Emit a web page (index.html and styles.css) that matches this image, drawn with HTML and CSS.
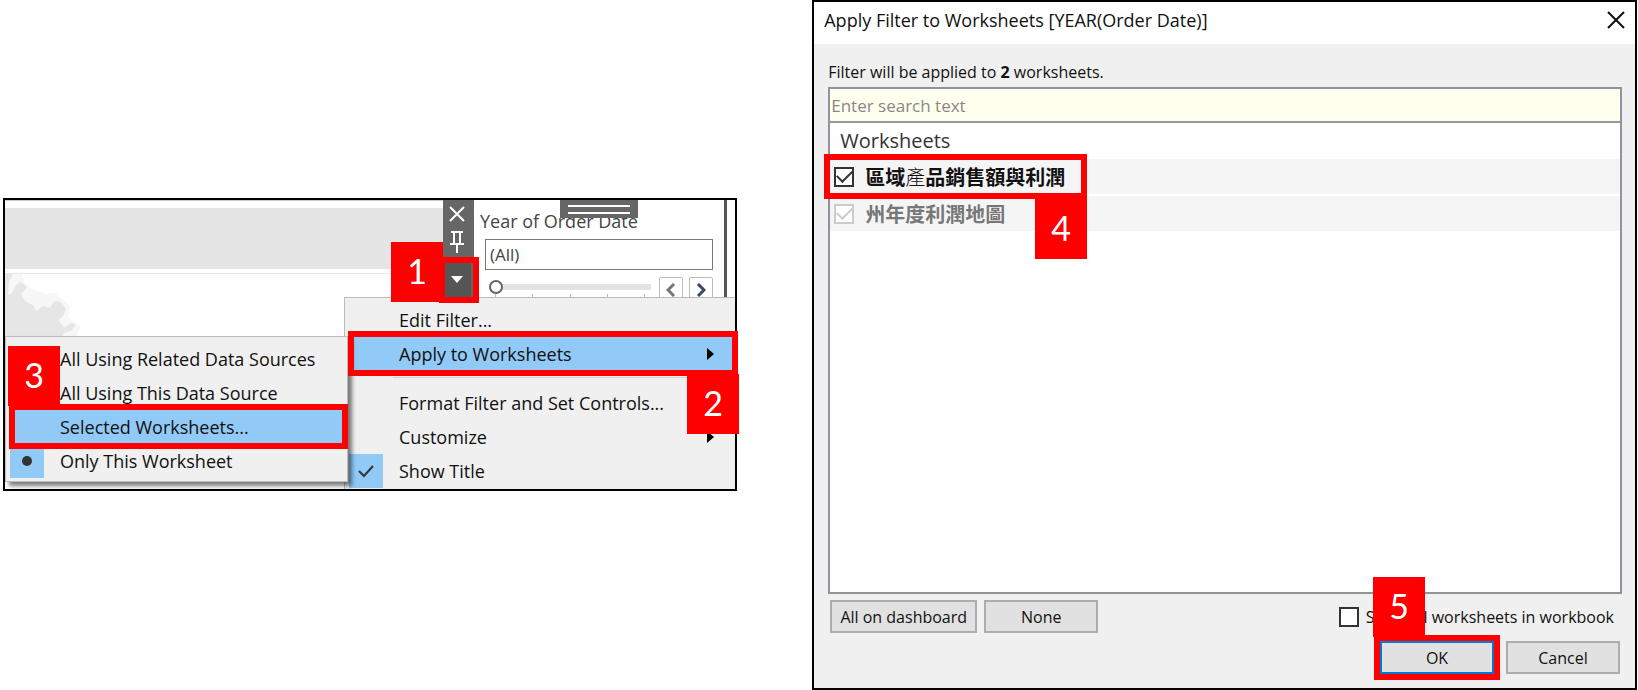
FILE: index.html
```html
<!DOCTYPE html>
<html lang="zh-Hant">
<head>
<meta charset="utf-8">
<title>Apply Filter to Worksheets</title>
<link rel="stylesheet" href="styles.css">
</head>
<body>
<main class="guide">
  <section class="dashboard" aria-label="Dashboard filter menu">
    <div class="sheet">
      <div class="sheet-band"></div>
      <svg class="map" width="82" height="64" viewBox="0 0 82 64" aria-hidden="true">
        <path fill="#f7f7f7" d="M0 0H16L20 10L27 15L42 20L50 19L60 28L65 33L63 43L70 49L76 52L70 64H0Z"/>
        <path fill="#e6e6e6" d="M0 0H8L4 7L3 21L7 19L11 11L16 8L22 13L16 20L20 27L29 32L31 37L38 32L45 34L49 27L56 28L61 35L58 42L53 46L59 54L66 49L71 51L66 57L59 59L57 64H0Z"/>
      </svg>
    </div>
    <div class="card-tools">
      <button class="tool" aria-label="Remove"><svg width="18" height="18" viewBox="0 0 18 18"><path d="M2 2L16 16M16 2L2 16" stroke="#fff" stroke-width="2" fill="none"/></svg></button>
      <button class="tool" aria-label="Pin"><svg width="14" height="22" viewBox="0 0 14 22"><path d="M1 1H13M4 1V12M10 1V12M0 13H14M7 13V22" stroke="#fff" stroke-width="2" fill="none"/></svg></button>
      <button class="tool tool-menu" aria-label="More options"><svg width="12" height="7" viewBox="0 0 12 7"><path d="M0 0H12L6 7Z" fill="#fff"/></svg></button>
      <span class="ring ring-tool"></span>
      <span class="badge badge-1">1</span>
    </div>
    <div class="filter-card">
      <label class="card-title" for="year">Year of Order Date</label>
      <span class="handle"></span>
      <input class="year" id="year" type="text" value="(All)">
      <div class="slider-row">
        <div class="slider">
          <input class="range" type="range" min="0" max="4" value="0" aria-label="Year">
          <div class="ticks"><i></i><i></i><i></i><i></i><i></i></div>
        </div>
        <button class="step" aria-label="Previous"><svg width="10" height="14" viewBox="0 0 10 14"><path d="M8 1L2 7L8 13" stroke="#777" stroke-width="3" fill="none"/></svg></button>
        <button class="step" aria-label="Next"><svg width="10" height="14" viewBox="0 0 10 14"><path d="M2 1L8 7L2 13" stroke="#3c4a60" stroke-width="3" fill="none"/></svg></button>
      </div>
    </div>
    <div class="menu main-menu" role="menu">
      <button class="item" role="menuitem">Edit Filter...</button>
      <div class="callout">
        <button class="item active" role="menuitem">Apply to Worksheets<svg class="arrow" width="8" height="12" viewBox="0 0 8 12"><path d="M0 0L7 6L0 12Z"/></svg></button>
        <span class="ring ring-apply"></span>
        <span class="badge badge-2">2</span>
      </div>
      <div class="divider"></div>
      <button class="item" role="menuitem">Format Filter and Set Controls...</button>
      <button class="item" role="menuitem">Customize<svg class="arrow" width="8" height="12" viewBox="0 0 8 12"><path d="M0 0L7 6L0 12Z"/></svg></button>
      <button class="item" role="menuitemcheckbox" aria-checked="true"><span class="mark"><svg width="18" height="14" viewBox="0 0 18 14"><path d="M2 7L7 12L16 2" stroke="#333" stroke-width="2" fill="none"/></svg></span>Show Title</button>
    </div>
    <div class="menu sub-menu" role="menu">
      <button class="item" role="menuitem">All Using Related Data Sources</button>
      <button class="item" role="menuitem">All Using This Data Source</button>
      <div class="callout">
        <button class="item active" role="menuitem">Selected Worksheets...</button>
        <span class="ring ring-selected"></span>
        <span class="badge badge-3">3</span>
      </div>
      <button class="item" role="menuitemradio" aria-checked="true"><span class="mark"><svg width="10" height="10" viewBox="0 0 10 10"><circle cx="5" cy="5" r="5" fill="#333"/></svg></span>Only This Worksheet</button>
    </div>
  </section>

  <section class="dialog" role="dialog" aria-labelledby="dialog-title">
    <header class="title-bar">
      <h1 class="dialog-title" id="dialog-title">Apply Filter to Worksheets [YEAR(Order Date)]</h1>
      <button class="close" aria-label="Close"><svg width="18" height="18" viewBox="0 0 18 18"><path d="M1 1L17 17M17 1L1 17" stroke="#111" stroke-width="2" fill="none"/></svg></button>
    </header>
    <div class="dialog-body">
      <p class="summary">Filter will be applied to <b>2</b> worksheets.</p>
      <div class="picker">
        <input class="search" type="text" placeholder="Enter search text" aria-label="Search worksheets">
        <h2 class="list-title">Worksheets</h2>
        <div class="row callout">
          <label class="choice"><input class="box" type="checkbox" checked><span class="name">區域<span class="thin">產</span>品銷售額與利潤</span></label>
          <span class="ring ring-row"></span>
          <span class="badge badge-4">4</span>
        </div>
        <div class="row">
          <label class="choice"><input class="box" type="checkbox" checked disabled><span class="name muted">州年度利潤地圖</span></label>
        </div>
      </div>
      <div class="options">
        <button class="btn btn-wide">All on dashboard</button>
        <button class="btn">None</button>
        <label class="show-all"><input class="box" type="checkbox"><span>Show all worksheets in workbook</span></label>
      </div>
      <div class="actions">
        <div class="callout">
          <button class="btn btn-default">OK</button>
          <span class="ring ring-ok"></span>
          <span class="badge badge-5">5</span>
        </div>
        <button class="btn">Cancel</button>
      </div>
    </div>
  </section>
</main>
</body>
</html>
```

FILE: styles.css
```css
* { box-sizing: border-box; }

body {
  margin: 0;
  background: #fff;
  color: #111;
  font: 18px/24px "Open Sans", "Noto Sans", "Noto Sans CJK TC", sans-serif;
}

button, input { font: inherit; color: inherit; }
button { border: 0; padding: 0; background: none; }
svg { display: block; }

.guide {
  display: flex;
  align-items: center;
  gap: 75px;
  min-height: 100vh;
  padding: 0 1px 0 3px;
}

/* Numbered step markers */
.callout { position: relative; }

.ring {
  position: absolute;
  border: 6px solid #f00;
  z-index: 2;
  pointer-events: none;
}

.badge {
  position: absolute;
  z-index: 3;
  width: 52px;
  height: 60px;
  background: #f00;
  color: #fff;
  font: 34px/58px Lato, sans-serif;
  text-align: center;
}

.ring-tool { inset: 57px -5px -6px -4px; }
.badge-1 { left: -52px; top: 42px; }
.ring-apply { inset: -6px -3px -5px -1px; }
.badge-2 { right: -4px; top: 37px; }
.ring-selected { inset: -6px -1px -5px -1px; }
.badge-3 { left: -2px; top: -64px; }
.ring-row { left: -6px; top: -5px; width: 263px; height: 45px; }
.badge-4 { left: 205px; top: 40px; }
.ring-ok { inset: -6px; }
.badge-5 { left: -7px; top: -64px; }

/* Dashboard with open menus */
.dashboard {
  flex: 734 1 0;
  display: grid;
  grid-template-columns: 339px 99px 31px 1fr;
  grid-template-rows: 97px auto;
  margin-bottom: 2px;
  border: 2px solid #000;
}

.sheet {
  grid-area: 1 / 1 / 3 / 3;
  padding-top: 7px;
  border-top: 1px solid #ccc;
}

.sheet-band {
  height: 66px;
  border-bottom: 1px solid #e8e8e8;
  background: linear-gradient(#e5e5e5 61px, #fff 61px);
}

.card-tools {
  grid-area: 1 / 3;
  position: relative;
  display: flex;
  flex-direction: column;
  padding-right: 3px;
  background: #666;
}

.tool { display: grid; place-items: center; height: 28px; }
.tool-menu { height: 34px; margin-top: 7px; background: #555; }

.filter-card {
  grid-area: 1 / 4;
  position: relative;
  display: flex;
  flex-direction: column;
  height: 97px;
  margin-right: 8px;
  padding: 9px 11px 0;
  border-right: 3px solid #555;
  overflow: hidden;
}

.card-title { margin: 0 -5px 6px; color: #444; }

.handle {
  position: absolute;
  left: 86px;
  top: 0;
  width: 78px;
  height: 18px;
  background: linear-gradient(#fff, #fff) 50% 5px / 62px 2px no-repeat,
    linear-gradient(#fff, #fff) 50% 12px / 62px 2px no-repeat, #666;
}

.year {
  flex: none;
  width: 100%;
  height: 31px;
  padding: 0 4px;
  border: 1px solid #777;
  background: #fff;
  color: #444;
  font-size: 17px;
}

.slider-row { display: flex; gap: 6px; margin-top: 7px; }
.slider { flex: 1; padding: 3px 2px 0 4px; }

.range {
  appearance: none;
  display: block;
  width: 100%;
  height: 14px;
  margin: 0;
  background: linear-gradient(#e3e3e3, #e3e3e3) 0 4px / 100% 6px no-repeat;
}

.range::-webkit-slider-thumb {
  appearance: none;
  width: 14px;
  height: 14px;
  border: 2px solid #666;
  border-radius: 50%;
  background: #fff;
}

.ticks { display: flex; justify-content: space-between; padding: 0 6px; }
.ticks i { width: 1px; height: 5px; background: #bbb; }

.step {
  display: grid;
  place-items: center;
  width: 24px;
  height: 26px;
  border: 1px solid #bbb;
  border-radius: 2px;
}

.menu {
  display: flex;
  flex-direction: column;
  border: 1px solid #bbb;
  background: #f0f0f0;
}

.main-menu {
  grid-area: 2 / 2 / 3 / 5;
  padding: 5px 0 1px 4px;
  border-width: 1px 0 0 1px;
}

.sub-menu {
  grid-area: 2 / 1;
  align-self: start;
  z-index: 1;
  margin: 39px -4px 7px 0;
  padding: 5px 0 3px 4px;
  box-shadow: 4px 4px 4px rgba(0, 0, 0, 0.5);
}

.item {
  position: relative;
  display: flex;
  align-items: center;
  width: 100%;
  height: 34px;
  padding-left: 50px;
  text-align: left;
}

.active { background: #91c9f7; }
.arrow { margin: 0 20px 0 auto; }

.mark {
  display: grid;
  place-items: center;
  width: 34px;
  height: 34px;
  margin: 0 16px 0 -50px;
  background: #91c9f7;
}

.divider {
  height: 15px;
  margin-left: 44px;
  background: linear-gradient(#d5d5d5, #d5d5d5) 0 6px / 100% 1px no-repeat;
}

/* Dialog */
.dialog {
  flex: 825 1 0;
  align-self: stretch;
  display: flex;
  flex-direction: column;
  border: 2px solid #000;
  background: #f0f0f0;
}

.title-bar {
  display: flex;
  align-items: center;
  justify-content: space-between;
  height: 42px;
  padding: 0 10px 6px 10px;
  background: #fff;
}

.dialog-title { margin: 0; font-size: 18px; font-weight: 400; }

.dialog-body {
  flex: 1;
  display: flex;
  flex-direction: column;
  padding: 16px 13px 14px 14px;
  font-size: 16px;
}

.summary { margin: 0 0 3px; }

.picker {
  flex: 1;
  border: 2px solid #8f939c;
  background: #fff;
}

.search {
  display: block;
  width: 100%;
  height: 34px;
  padding: 0 1px;
  border: 0;
  border-bottom: 2px solid #999;
  background: #ffffee;
  font-size: 17px;
}

.search::placeholder { color: #888; opacity: 1; }

.list-title {
  margin: 0;
  padding: 6px 10px;
  color: #333;
  font-size: 20px;
  font-weight: 400;
}

.row {
  height: 35px;
  margin-bottom: 2px;
  padding-left: 4px;
  background: #f5f5f5;
}

.choice, .show-all { display: flex; align-items: center; }
.choice { gap: 11px; height: 35px; }

.box {
  appearance: none;
  flex: none;
  width: 20px;
  height: 20px;
  margin: 0;
  border: 2px solid #333;
  background: #fff;
}

.box:checked {
  display: grid;
  place-items: center;
}

.box:checked::before {
  content: "";
  width: 13px;
  height: 7px;
  border: solid #333;
  border-width: 0 0 2px 2px;
  transform: translateY(-2px) rotate(-45deg);
}

.box:disabled, .box:disabled::before { border-color: #ccc; }

.name { font: 700 20px/24px "Noto Sans CJK TC", sans-serif; }
.thin { font-weight: 300; }
.muted { color: #777; }

.options { display: flex; gap: 7px; margin: 6px 0 8px 2px; }

.btn {
  width: 114px;
  height: 33px;
  border: 2px solid #adadad;
  background: #e1e1e1;
}

.btn-wide { width: 147px; }
.btn-default { display: block; border-color: #0078d7; }
.show-all { gap: 7px; margin: 0 8px 0 auto; }

.actions { display: flex; justify-content: flex-end; gap: 12px; margin-right: 2px; }
```
